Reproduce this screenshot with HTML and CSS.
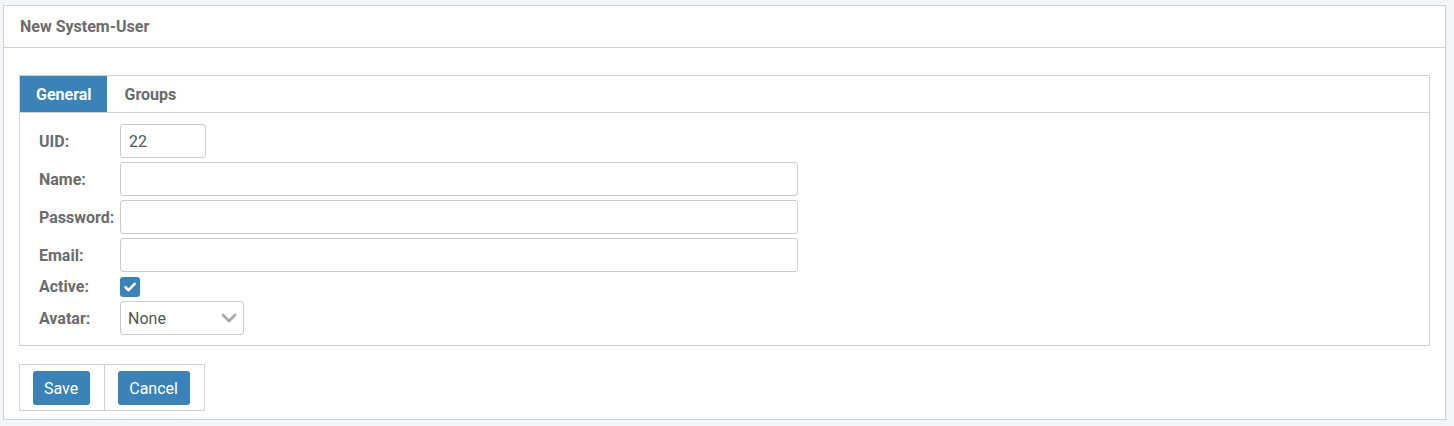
FILE: index.html
```html
<!DOCTYPE html>
<html>
<head>
<meta charset="utf-8">
<link rel="stylesheet" href="styles.css">
</head>
<body>
<div class="panel">
  <div class="panel-header">New System-User</div>
  <div class="panel-body">
    <div class="tabbox">
      <div class="tabs">
        <div class="tab active">General</div>
        <div class="tab">Groups</div>
      </div>
      <div class="form">
        <label class="lbl">UID:</label>
        <div class="field"><div class="input uid">22</div></div>
        <label class="lbl">Name:</label>
        <div class="field"><div class="input wide"></div></div>
        <label class="lbl">Password:</label>
        <div class="field"><div class="input wide"></div></div>
        <label class="lbl">Email:</label>
        <div class="field"><div class="input wide"></div></div>
        <label class="lbl short">Active:</label>
        <div class="field short">
          <span class="check">
            <svg width="14" height="14" viewBox="0 0 14 14"><path d="M2.5 7.2 L5.6 10.2 L11.6 3.8" fill="none" stroke="#fff" stroke-width="2.6" stroke-linecap="round" stroke-linejoin="round"/></svg>
          </span>
        </div>
        <label class="lbl">Avatar:</label>
        <div class="field">
          <div class="select">
            <span>None</span>
            <svg width="16" height="10" viewBox="0 0 16 10"><path d="M2 2 L8 8 L14 2" fill="none" stroke="#a9a9a9" stroke-width="2.8" stroke-linecap="round" stroke-linejoin="round"/></svg>
          </div>
        </div>
      </div>
    </div>
    <div class="actions">
      <div class="cell"><button class="btn">Save</button></div>
      <div class="cell"><button class="btn">Cancel</button></div>
    </div>
  </div>
</div>
</body>
</html>
```

FILE: styles.css
```css
html, body {
  margin: 0;
  padding: 0;
}
body {
  background: #f2f6f9;
  font-family: Roboto, "Liberation Sans", sans-serif;
  font-size: 16px;
  color: #666;
  padding: 5px 8px 7px 3px;
  height: 426px;
  box-sizing: border-box;
}
.panel {
  background: #fff;
  border: 1px solid #cdd0d4;
  height: 415px;
  box-sizing: border-box;
}
.panel-header {
  height: 42px;
  border-bottom: 1px solid #cdd0d4;
  box-sizing: border-box;
  padding: 0 16px;
  display: flex;
  align-items: center;
  font-weight: bold;
  color: #6b6b6b;
  font-size: 16px;
}
.panel-body {
  padding: 27px 15px 8px 15px;
}
.tabbox {
  border: 1px solid #cdd0d4;
}
.tabs {
  display: flex;
  height: 37px;
  border-bottom: 1px solid #cdd0d4;
  box-sizing: border-box;
}
.tab {
  padding: 0 17px 0 18px;
  display: flex;
  align-items: center;
  font-weight: bold;
  color: #6b6b6b;
}
.tab.active {
  background: #3a82b7;
  color: #fff;
  padding: 0 15px 0 16px;
}
.form {
  display: grid;
  grid-template-columns: 81px 1fr;
  row-gap: 4px;
  padding: 11px 19px 10px 19px;
}
.lbl {
  font-weight: bold;
  color: #6b6b6b;
  height: 34px;
  display: flex;
  align-items: center;
}
.lbl.short, .field.short {
  height: 21px;
}
.field {
  display: flex;
  align-items: center;
}
.input {
  height: 34px;
  box-sizing: border-box;
  border: 1px solid #c9ccd0;
  border-radius: 3px;
  padding: 0 8px;
  display: flex;
  align-items: center;
  color: #555;
  font-size: 16px;
}
.input.uid {
  width: 86px;
}
.input.wide {
  width: 678px;
}
.check {
  width: 20px;
  height: 20px;
  background: #3a82b7;
  border-radius: 3px;
  display: flex;
  align-items: center;
  justify-content: center;
}
.select {
  width: 124px;
  height: 34px;
  box-sizing: border-box;
  border: 1px solid #c9ccd0;
  border-radius: 3px;
  padding: 0 6px 0 7px;
  display: flex;
  align-items: center;
  justify-content: space-between;
  color: #555;
  font-size: 16px;
}
.actions {
  margin-top: 18px;
  display: inline-flex;
  border: 1px solid #cdd0d4;
}
.cell {
  padding: 6px 14px 5px 13px;
}
.cell + .cell {
  border-left: 1px solid #cdd0d4;
}
.btn {
  height: 34px;
  background: #3a82b7;
  color: #fff;
  border: none;
  border-radius: 3px;
  font-family: Roboto, "Liberation Sans", sans-serif;
  font-size: 16px;
  padding: 0 12px 0 11px;
  display: block;
}
```
